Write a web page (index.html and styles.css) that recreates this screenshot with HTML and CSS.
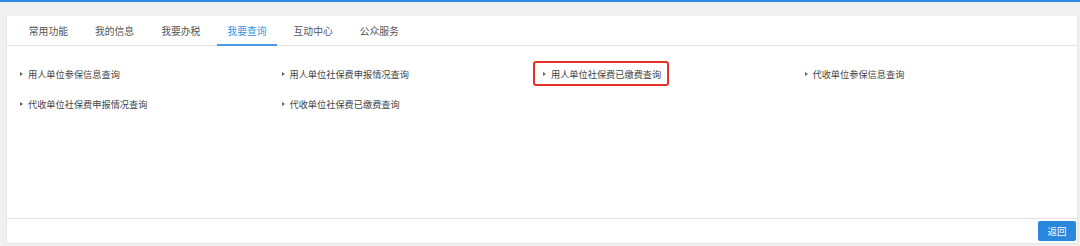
FILE: index.html
```html
<!DOCTYPE html>
<html lang="zh-CN">
<head>
<meta charset="utf-8">
<title>我要查询</title>
<link rel="stylesheet" href="styles.css">
</head>
<body>
<div class="topbar"></div>
<div class="page">
  <div class="panel">
    <div class="tabs">
      <div class="tab">常用功能</div>
      <div class="tab">我的信息</div>
      <div class="tab">我要办税</div>
      <div class="tab active">我要查询</div>
      <div class="tab">互动中心</div>
      <div class="tab">公众服务</div>
    </div>
    <div class="content">
      <div class="grid">
        <div class="cell"><span class="item">用人单位参保信息查询</span></div>
        <div class="cell"><span class="item">用人单位社保费申报情况查询</span></div>
        <div class="cell"><span class="item marked">用人单位社保费已缴费查询</span></div>
        <div class="cell"><span class="item">代收单位参保信息查询</span></div>
        <div class="cell"><span class="item">代收单位社保费申报情况查询</span></div>
        <div class="cell"><span class="item">代收单位社保费已缴费查询</span></div>
      </div>
    </div>
    <div class="footer">
      <button class="btn">返回</button>
    </div>
  </div>
</div>
</body>
</html>
```

FILE: styles.css
```css
* { box-sizing: border-box; }
html, body {
  margin: 0;
  padding: 0;
  background: #f0f0f0;
  font-family: "Noto Sans CJK SC", "Noto Sans", sans-serif;
}
.topbar {
  height: 2px;
  background: #2b8ae0;
}
.page {
  padding: 14px 2px 0 6px;
}
.panel {
  height: 228px;
  background: #fff;
  border: 1px solid #e6e6e6;
  border-top: none;
  display: flex;
  flex-direction: column;
}
.tabs {
  display: flex;
  gap: 6.2px;
  padding-left: 11.4px;
  height: 30px;
  border-bottom: 1px solid #e2e2e2;
}
.tab {
  width: 60px;
  height: 29px;
  display: flex;
  align-items: center;
  justify-content: center;
  font-size: 9.8px;
  color: #555;
}
.tab.active {
  color: #3d8fe0;
  height: 30px;
  border-bottom: 2px solid #4a98e4;
  padding-top: 1px;
}
.content {
  flex: 1;
  padding: 13px 12px 0 13px;
}
.grid {
  display: grid;
  grid-template-columns: repeat(4, 261.5px);
  grid-auto-rows: 30px;
}
.cell {
  display: flex;
  align-items: center;
}
.item {
  position: relative;
  display: inline-flex;
  align-items: center;
  gap: 5px;
  font-size: 9.2px;
  line-height: 14px;
  color: #444;
}
.item::before {
  content: "";
  width: 0;
  height: 0;
  border-left: 3px solid #666;
  border-top: 2.5px solid transparent;
  border-bottom: 2.5px solid transparent;
}
.item.marked::after {
  content: "";
  position: absolute;
  top: -6px;
  bottom: -5px;
  left: -10px;
  right: -8px;
  border: 2px solid #e8302a;
  border-radius: 3px;
}
.footer {
  height: 25px;
  border-top: 1px solid #e2e2e2;
  display: flex;
  justify-content: flex-end;
  align-items: flex-start;
  padding: 2px 1px 0 0;
}
.btn {
  width: 38px;
  height: 20px;
  border: none;
  border-radius: 2px;
  background: #2a87de;
  color: #fff;
  font-family: inherit;
  font-size: 9.5px;
  padding: 0;
}
```
